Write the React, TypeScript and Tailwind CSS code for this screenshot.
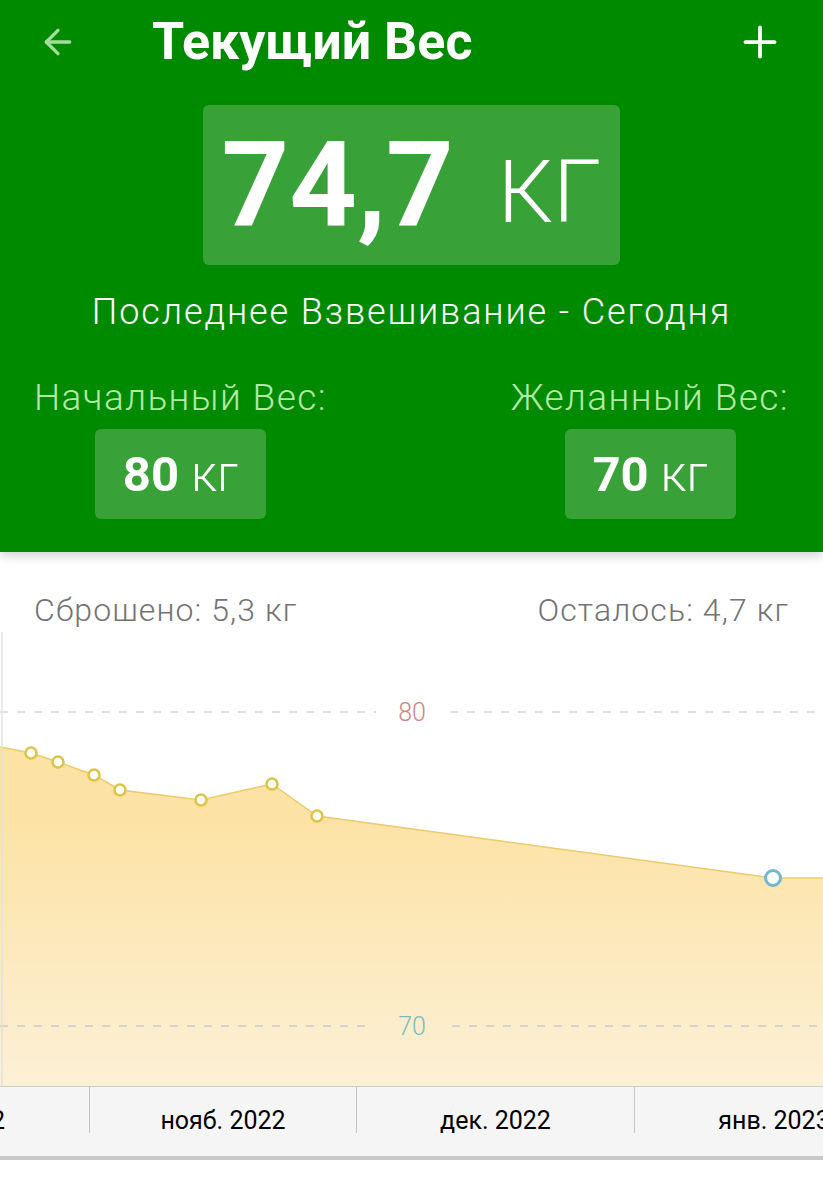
import { ArrowLeft, Plus } from 'lucide-react'

const POINTS: [number, number][] = [
  [31, 121],
  [58, 130],
  [94, 143],
  [120, 158],
  [201, 168],
  [272, 152],
  [317, 184],
]
const LAST: [number, number] = [773, 246]

function WeightChart() {
  const line = [[0, 115], ...POINTS, LAST, [823, 246]] as [number, number][]
  const d = line.map(([x, y], i) => `${i ? 'L' : 'M'}${x},${y}`).join(' ')
  return (
    <svg width="823" height="454" viewBox="0 0 823 454" className="block">
      <defs>
        <linearGradient id="fill" x1="0" y1="0" x2="0" y2="1">
          <stop offset="0.2" stopColor="#fce2a4" />
          <stop offset="1" stopColor="#fcf0d6" />
        </linearGradient>
      </defs>
      <path d={`${d} L823,454 L0,454 Z`} fill="url(#fill)" />
      <path d={d} fill="none" stroke="#ebcb6c" strokeWidth="1.5" />
      <line x1="0" y1="80" x2="376" y2="80" stroke="#d6d6d6" strokeWidth="1.5" strokeDasharray="8 9" />
      <line x1="450" y1="80" x2="823" y2="80" stroke="#d6d6d6" strokeWidth="1.5" strokeDasharray="8 9" />
      <text x="412" y="89" textAnchor="middle" fontSize="25" fontWeight="300" fill="#cf8585" fontFamily="Roboto, sans-serif">
        80
      </text>
      <line x1="0" y1="394" x2="372" y2="394" stroke="#c8cccc" strokeWidth="1.5" strokeDasharray="8 9" />
      <line x1="452" y1="394" x2="823" y2="394" stroke="#c8cccc" strokeWidth="1.5" strokeDasharray="8 9" />
      <text x="412" y="403" textAnchor="middle" fontSize="25" fontWeight="300" fill="#7bbcc4" fontFamily="Roboto, sans-serif">
        70
      </text>
      <line x1="2" y1="0" x2="2" y2="454" stroke="#e2e2e2" strokeWidth="1.5" />
      {POINTS.map(([x, y]) => (
        <circle key={x} cx={x} cy={y} r="5.5" fill="#fff" stroke="#dcc445" strokeWidth="2.5" />
      ))}
      <circle cx={LAST[0]} cy={LAST[1]} r="7.5" fill="#fff" stroke="#72b6cf" strokeWidth="3" />
    </svg>
  )
}

export default function App() {
  return (
    <div className="w-[823px] min-h-[1200px] bg-white overflow-hidden" style={{ fontFamily: 'Roboto, "Noto Sans", sans-serif' }}>
      {/* Header */}
      <div className="bg-[#008a00] h-[552px] shadow-[0_4px_10px_rgba(0,0,0,0.18)] relative z-10">
        <div className="flex items-center h-[84px] pl-[38px] pr-[38px]">
          <ArrowLeft className="w-[40px] h-[40px] text-[#a3dc9c]" strokeWidth={2} />
          <h1 className="ml-[74px] text-[52px] font-bold text-white leading-none">Текущий Вес</h1>
          <Plus className="ml-auto w-[50px] h-[50px] text-white" strokeWidth={1.8} />
        </div>

        <div className="flex justify-center mt-[21px]">
          <div className="w-[417px] h-[160px] rounded-[6px] bg-[#38a238] flex items-center justify-center gap-[44px] text-white">
            <span className="text-[118px] font-bold leading-none">74,7</span>
            <span className="text-[87px] font-light leading-none mt-[14px]">КГ</span>
          </div>
        </div>

        <p className="text-center text-white text-[36px] font-light tracking-[1.9px] mt-[29px] leading-none">
          Последнее Взвешивание - Сегодня
        </p>

        <div className="flex justify-between px-[34px] mt-[49px]">
          <div className="flex flex-col items-center">
            <p className="text-[37px] font-light tracking-[1.4px] text-[#b2e8a8] leading-none">Начальный Вес:</p>
            <div className="mt-[13px] w-[171px] h-[90px] rounded-[6px] bg-[#38a238] flex items-center justify-center gap-[12px] text-white">
              <span className="text-[49px] font-bold leading-none">80</span>
              <span className="text-[50px] font-light leading-none">кг</span>
            </div>
          </div>
          <div className="flex flex-col items-center">
            <p className="text-[37px] font-light tracking-[1.4px] text-[#b2e8a8] leading-none">Желанный Вес:</p>
            <div className="mt-[13px] w-[171px] h-[90px] rounded-[6px] bg-[#38a238] flex items-center justify-center gap-[12px] text-white">
              <span className="text-[49px] font-bold leading-none">70</span>
              <span className="text-[50px] font-light leading-none">кг</span>
            </div>
          </div>
        </div>
      </div>

      {/* Summary */}
      <div className="flex justify-between items-start px-[34px] pt-[42px] h-[80px] text-[32px] leading-none tracking-[1.1px] font-light text-[#737373]">
        <span>Сброшено: 5,3 кг</span>
        <span>Осталось: 4,7 кг</span>
      </div>

      <WeightChart />

      {/* Axis */}
      <div className="h-[74px] bg-[#f5f5f5] border-t border-[#cdcdcd] border-b-[4px] border-b-[#c9c9c9] flex overflow-hidden text-[25px] text-black">
        <div className="w-[90px] shrink-0 flex justify-end pr-[84px] border-r border-[#c4c4c4] h-[46px] items-center pt-[22px] overflow-hidden">
          <span className="whitespace-nowrap">окт. 2022</span>
        </div>
        <div className="w-[267px] shrink-0 flex justify-center border-r border-[#c4c4c4] h-[46px] items-center pt-[22px]">
          <span>нояб. 2022</span>
        </div>
        <div className="w-[278px] shrink-0 flex justify-center border-r border-[#c4c4c4] h-[46px] items-center pt-[22px]">
          <span>дек. 2022</span>
        </div>
        <div className="w-[278px] shrink-0 flex justify-center h-[46px] items-center pt-[22px]">
          <span className="whitespace-nowrap">янв. 2023</span>
        </div>
      </div>
    </div>
  )
}
